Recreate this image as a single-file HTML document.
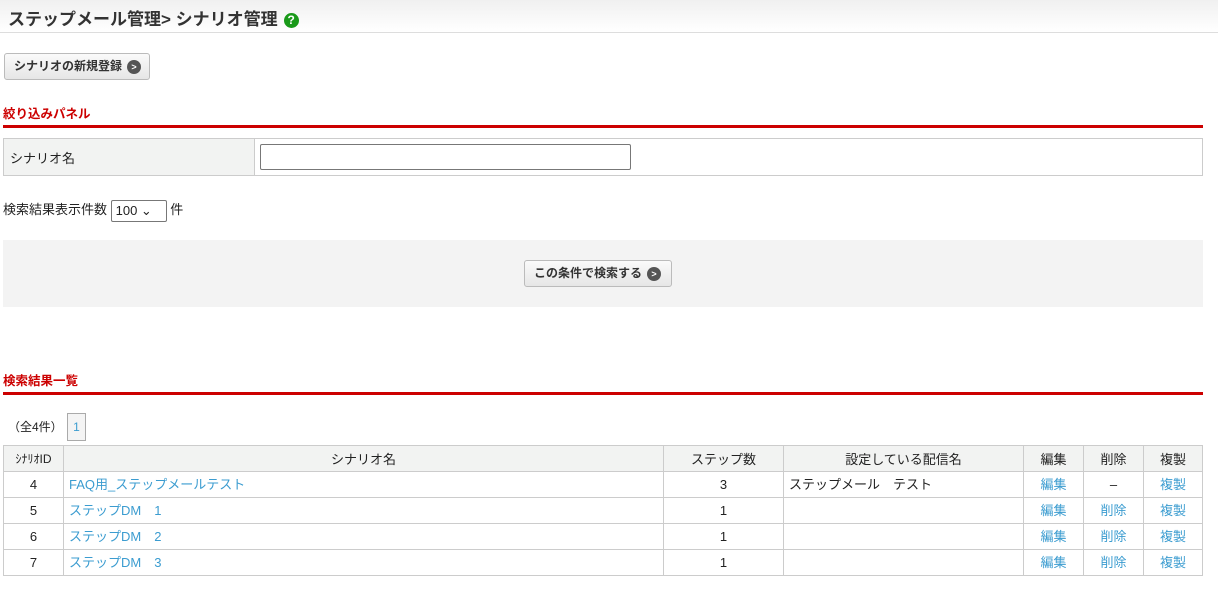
<!DOCTYPE html>
<html><head><meta charset="utf-8"><style>
*{margin:0;padding:0;box-sizing:border-box}
body{width:1218px;height:592px;background:#fff;font-family:"Liberation Sans","Noto Sans CJK JP",sans-serif;font-size:13px;color:#222;position:relative;overflow:hidden}
.hdr{position:absolute;left:0;top:0;width:1218px;height:33px;background:linear-gradient(#f0f0f0,#fff);border-bottom:1px solid #ddd}
.hdr h1{position:absolute;left:8px;top:5px;font-size:17px;font-weight:bold;color:#333}
.q{display:inline-block;width:15px;height:15px;border-radius:50%;background:#1a9a1a;color:#fff;font-size:12px;text-align:center;line-height:15px;vertical-align:1px;margin-left:6px}
.btn{position:absolute;border:1px solid #bbb;border-radius:3px;background:linear-gradient(#fafafa,#e6e6e6);font-size:12px;font-weight:bold;color:#333;line-height:24px;padding-left:9px}
.arr{display:inline-block;width:14px;height:14px;border-radius:50%;background:#555;color:#fff;font-size:9px;text-align:center;line-height:14px;vertical-align:0px;margin-left:5px}
.sec{position:absolute;left:3px;width:1200px;border-bottom:3px solid #c00;color:#c00;font-weight:bold;font-size:12.5px}
.a{color:#3b9cd0}
table{position:absolute;left:3px;top:445px;width:1200px;border-collapse:collapse}
td,th{border:1px solid #ccc;height:26px;font-size:13px;font-weight:normal;padding-top:0}
th{background:#f2f3f2}
td{text-align:center;line-height:22px}
</style></head><body>
<div class="hdr"><h1>ステップメール管理&gt; シナリオ管理<span class="q">?</span></h1></div>
<div class="btn" style="left:4px;top:53px;width:146px;height:27px">シナリオの新規登録<span class="arr">&gt;</span></div>
<div class="sec" style="top:103px;height:25px">絞り込みパネル</div>
<div style="position:absolute;left:3px;top:138px;width:1200px;height:38px;border:1px solid #ccc"><div style="position:absolute;left:0;top:0;width:251px;height:36px;background:#f2f3f2;border-right:1px solid #ccc;padding:9px 6px">シナリオ名</div><div style="position:absolute;left:256px;top:5px;width:371px;height:26px;border:1px solid #777;border-radius:2px"></div></div>
<div style="position:absolute;left:3px;top:199px;font-size:13px">検索結果表示件数 <span style="display:inline-block;width:56px;height:22px;border:1px solid #777;border-radius:2px;vertical-align:middle;padding:2px 4px;font-size:13px">100 ⌄</span> 件</div>
<div style="position:absolute;left:3px;top:240px;width:1200px;height:67px;background:#f3f3f3"></div>
<div class="btn" style="left:524px;top:260px;width:148px;height:27px">この条件で検索する<span class="arr">&gt;</span></div>
<div class="sec" style="top:370px;height:25px">検索結果一覧</div>
<div style="position:absolute;left:8px;top:418px;font-size:12px">（全4件）</div>
<div style="position:absolute;left:67px;top:413px;width:19px;height:28px;border:1px solid #aaa;background:#f4f4f4;color:#3b9cd0;font-size:12px;text-align:center;line-height:26px">1</div>
<table>
<tr><th style="width:60px;font-size:12px">ｼﾅﾘｵID</th><th style="width:600px">シナリオ名</th><th style="width:120px">ステップ数</th><th style="width:240px">設定している配信名</th><th style="width:60px">編集</th><th style="width:60px">削除</th><th>複製</th></tr>
<tr><td>4</td><td class="a" style="text-align:left;padding-left:5px">FAQ用_ステップメールテスト</td><td>3</td><td style="text-align:left;padding-left:5px">ステップメール　テスト</td><td class="a">編集</td><td>–</td><td class="a">複製</td></tr>
<tr><td>5</td><td class="a" style="text-align:left;padding-left:5px">ステップDM　1</td><td>1</td><td></td><td class="a">編集</td><td class="a">削除</td><td class="a">複製</td></tr>
<tr><td>6</td><td class="a" style="text-align:left;padding-left:5px">ステップDM　2</td><td>1</td><td></td><td class="a">編集</td><td class="a">削除</td><td class="a">複製</td></tr>
<tr><td>7</td><td class="a" style="text-align:left;padding-left:5px">ステップDM　3</td><td>1</td><td></td><td class="a">編集</td><td class="a">削除</td><td class="a">複製</td></tr>
</table>
</body></html>
